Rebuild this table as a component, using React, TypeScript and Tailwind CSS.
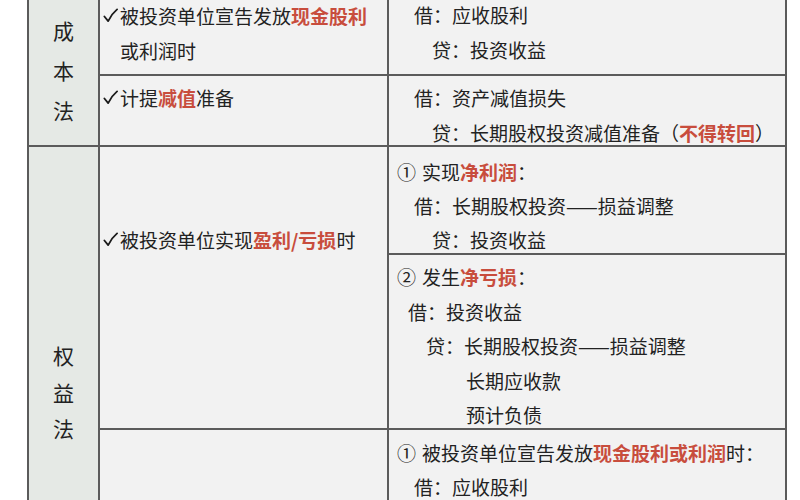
import type { ReactNode } from 'react'

// Accounting comparison table: 成本法 vs 权益法

const Red = ({ children }: { children: ReactNode }) => (
  <span className="font-bold text-[#c84d3d]">{children}</span>
)

const Check = () => (
  <span className="flex h-[34px] w-[17px] shrink-0 items-center">
    <svg viewBox="0 0 16 16" className="h-[15px] w-[15px] -translate-y-[1px]">
      <path d="M1.5 9 L5.5 14 Q9 6.5 15 1.5" fill="none" stroke="#1a1a1a" strokeWidth="1.9" strokeLinecap="round" strokeLinejoin="round" />
    </svg>
  </span>
)

function Line({ indent, children }: { indent: number; children: ReactNode }) {
  return (
    <div className="whitespace-nowrap" style={{ paddingLeft: indent }}>
      {children}
    </div>
  )
}

function Method({ chars, step }: { chars: string[]; step: string }) {
  return (
    <div className={`flex flex-col items-center text-[21px] ${step}`}>
      {chars.map((c) => (
        <span key={c}>{c}</span>
      ))}
    </div>
  )
}

export default function App() {
  return (
    <div className="h-[500px] w-[800px] overflow-hidden bg-white font-['Noto_Sans_CJK_SC','Noto_Sans',sans-serif] text-[19px] text-[#222]">
      <div className="ml-[27px] grid w-[760px] grid-cols-[69px_287px_396px] grid-rows-[74px_69px_106px_173px_200px] gap-[2px] border-x-2 border-[#5b5b5b] bg-[#5b5b5b]">
        {/* 成本法 */}
        <div className="row-span-2 bg-[#e5e9e5] pt-[10px]">
          <Method chars={['成', '本', '法']} step="leading-[40px]" />
        </div>

        <div className="bg-[#f2f2f2] pl-[3px] leading-[34.5px]">
          <div className="-mt-px flex">
            <Check />
            <div>
              <div className="whitespace-nowrap">
                被投资单位宣告发放<Red>现金股利</Red>
              </div>
              <div>或利润时</div>
            </div>
          </div>
        </div>
        <div className="bg-[#f2f2f2] leading-[34.5px]">
          <div className="-mt-[2px]">
            <Line indent={25}>借：应收股利</Line>
            <Line indent={43}>贷：投资收益</Line>
          </div>
        </div>

        <div className="bg-[#f2f2f2] pl-[3px] pt-[5px] leading-[34.5px]">
          <div className="flex">
            <Check />
            <span>
              计提<Red>减值</Red>准备
            </span>
          </div>
        </div>
        <div className="bg-[#f2f2f2] pt-[5px] leading-[34.5px]">
          <Line indent={25}>借：资产减值损失</Line>
          <Line indent={43}>
            贷：长期股权投资减值准备（<Red>不得转回</Red>）
          </Line>
        </div>

        {/* 权益法 */}
        <div className="row-span-3 bg-[#e5e9e5] pt-[190px]">
          <Method chars={['权', '益', '法']} step="leading-[36.5px]" />
        </div>

        <div className="row-span-2 bg-[#f2f2f2] pl-[3px] pt-[76px] leading-[34px]">
          <div className="flex">
            <Check />
            <span className="whitespace-nowrap">
              被投资单位实现<Red>盈利/亏损</Red>时
            </span>
          </div>
        </div>
        <div className="bg-[#f2f2f2] pt-[8px] leading-[34px]">
          <Line indent={8}>
            ①<span className="ml-[6px]">实现</span>
            <Red>净利润</Red>：
          </Line>
          <Line indent={25}>借：长期股权投资——损益调整</Line>
          <Line indent={43}>贷：投资收益</Line>
        </div>

        <div className="bg-[#f2f2f2] pt-[5px] leading-[34.5px]">
          <Line indent={8}>
            ②<span className="ml-[6px]">发生</span>
            <Red>净亏损</Red>：
          </Line>
          <Line indent={19}>借：投资收益</Line>
          <Line indent={37}>贷：长期股权投资——损益调整</Line>
          <Line indent={77}>长期应收款</Line>
          <Line indent={77}>预计负债</Line>
        </div>

        <div className="bg-[#f2f2f2]" />
        <div className="bg-[#f2f2f2] pt-[6px] leading-[34px]">
          <Line indent={8}>
            ①<span className="ml-[6px]">被投资单位宣告发放</span>
            <Red>现金股利或利润</Red>时：
          </Line>
          <Line indent={25}>借：应收股利</Line>
        </div>
      </div>
    </div>
  )
}
